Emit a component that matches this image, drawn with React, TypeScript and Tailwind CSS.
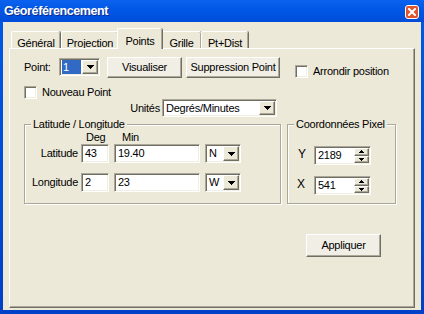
import type { ReactNode } from 'react'

const sunken =
  'border border-t-[#ACA899] border-l-[#ACA899] border-r-white border-b-white shadow-[inset_1px_1px_0_#716F64,inset_-1px_-1px_0_#F1EFE2]'
const raised =
  'border border-t-white border-l-white border-r-[#716F64] border-b-[#716F64] shadow-[inset_-1px_-1px_0_#ACA899]'

function Arrow({ up = false, small = false }: { up?: boolean; small?: boolean }) {
  const w = small ? 5 : 7
  const h = small ? 3 : 4
  const d = up ? `M0 ${h}h${w}L${w / 2} 0z` : `M0 0h${w}L${w / 2} ${h}z`
  return (
    <svg width={w} height={h} viewBox={`0 0 ${w} ${h}`} shapeRendering="crispEdges">
      <path d={d} fill="#000" />
    </svg>
  )
}

function DropBtn() {
  return (
    <div className={`${raised} flex w-[16px] shrink-0 items-center justify-center bg-[#ECE9D8]`}>
      <Arrow />
    </div>
  )
}

function Combo({ className, children }: { className: string; children: ReactNode }) {
  return (
    <div className={`${sunken} flex bg-white p-px ${className}`}>
      <div className="flex min-w-0 flex-1 items-center">{children}</div>
      <DropBtn />
    </div>
  )
}

function Field({ className, value }: { className: string; value: string }) {
  return (
    <div className={`${sunken} flex items-center bg-white pl-[3px] ${className}`}>
      {value}
    </div>
  )
}

function Spin({ value }: { value: string }) {
  return (
    <div className={`${sunken} flex h-[19px] w-[57px] bg-white p-px`}>
      <div className="flex flex-1 items-center pl-[2px]">{value}</div>
      <div className="flex w-[15px] flex-col">
        <div className={`${raised} flex flex-1 items-center justify-center bg-[#ECE9D8]`}>
          <Arrow up small />
        </div>
        <div className={`${raised} flex flex-1 items-center justify-center bg-[#ECE9D8]`}>
          <Arrow small />
        </div>
      </div>
    </div>
  )
}

function Check() {
  return <div className={`${sunken} h-[13px] w-[13px] shrink-0 bg-white`} />
}

function Button({ className, children }: { className: string; children: ReactNode }) {
  return (
    <div className={`${raised} flex items-center justify-center bg-[#F0EEE5] ${className}`}>
      {children}
    </div>
  )
}

function Group({ title, className, children }: { title: string; className: string; children: ReactNode }) {
  return (
    <div
      className={`relative border border-[#ACA899] shadow-[inset_1px_1px_0_#fff,1px_1px_0_#fff] ${className}`}
    >
      <div className="absolute -top-[7px] left-[6px] bg-[#ECE9D8] px-[2px] leading-[13px]">{title}</div>
      {children}
    </div>
  )
}

const tabs = [
  { label: 'Général', w: 'w-[49px]', ml: 'ml-0' },
  { label: 'Projection', w: 'w-[57px]', ml: 'ml-[1px]' },
  { label: 'Points', w: 'w-[45px]', ml: 'ml-0', active: true },
  { label: 'Grille', w: 'w-[40px]', ml: 'ml-0' },
  { label: 'Pt+Dist', w: 'w-[47px]', ml: 'ml-0' },
]

export default function App() {
  return (
    <div className="flex h-[314px] w-[424px] flex-col bg-[#0050DC] font-['Liberation_Sans',Arial,sans-serif] text-[11px] tracking-[-0.25px] text-black">
      {/* title bar */}
      <div className="flex h-[22px] shrink-0 items-center justify-between bg-gradient-to-b from-[#0A62EE] via-[#0056E4] to-[#004CD8] pl-[4px] pr-[5px]">
        <span className="text-[12.5px] font-bold tracking-[-0.4px] text-white [text-shadow:1px_1px_0_#0A2C8C]">
          Géoréférencement
        </span>
        <div className="mt-[2px] flex h-[14px] w-[14px] items-center justify-center rounded-[3px] border border-white bg-[#E0552F]">
          <svg width="8" height="8" viewBox="0 0 8 8">
            <path d="M1 1L7 7M7 1L1 7" stroke="#fff" strokeWidth="2" strokeLinecap="square" />
          </svg>
        </div>
      </div>

      {/* frame */}
      <div className="flex flex-1 flex-col bg-gradient-to-b from-[#0058E6] to-[#0040C8] px-[3px] pb-[4px]">
        <div className="flex flex-1 flex-col bg-[#ECE9D8] px-[6px] pt-[6px]">
          {/* tabs */}
          <div className="flex h-[20px] items-end pl-[2px]">
            {tabs.map((t) =>
              t.active ? (
                <div
                  key={t.label}
                  className={`relative z-10 -mx-[1px] -mb-px flex h-[21px] ${t.w} justify-center rounded-t-[2px] border-l border-t border-white bg-[#ECE9D8] pt-[4px] shadow-[inset_-1px_0_0_#ACA899,1px_0_0_#716F64]`}
                >
                  {t.label}
                </div>
              ) : (
                <div
                  key={t.label}
                  className={`flex h-[17px] ${t.w} ${t.ml} justify-center rounded-t-[2px] border-l border-t border-white pt-[3px] shadow-[inset_-1px_0_0_#ACA899,1px_0_0_#716F64]`}
                >
                  {t.label}
                </div>
              ),
            )}
          </div>

          {/* panel */}
          <div className="flex h-[260px] w-[406px] flex-col border border-t-white border-l-white border-r-[#716F64] border-b-[#716F64] pl-[14px] pt-[8px] shadow-[inset_-1px_-1px_0_#ACA899]">
            {/* row 1 */}
            <div className="flex h-[21px] items-start">
              <span className="flex h-[21px] w-[35px] items-center">Point:</span>
              <Combo className="mt-px h-[18px] w-[41px]">
                <span className="ml-px mr-px flex h-full flex-1 items-center bg-[#316AC5] pl-[1px] text-white">1</span>
              </Combo>
              <Button className="ml-[7px] h-[21px] w-[75px]">Visualiser</Button>
              <Button className="ml-[4px] h-[21px] w-[94px]">Suppression Point</Button>
              <div className="ml-[15px] mt-[6px] flex items-center">
                <Check />
                <span className="ml-[5px]">Arrondir position</span>
              </div>
            </div>

            {/* row 2 */}
            <div className="mt-[8px] flex h-[13px] items-center">
              <Check />
              <span className="ml-[5px]">Nouveau Point</span>
            </div>

            {/* row 3 */}
            <div className="flex w-[253px] items-center">
              <span className="flex-1 pr-[2px] text-right">Unités</span>
              <Combo className="h-[18px] w-[115px]">
                <span className="pl-[2px]">Degrés/Minutes</span>
              </Combo>
            </div>

            {/* groups */}
            <div className="mt-[7px] flex gap-[6px]">
              <Group title="Latitude / Longitude" className="h-[80px] w-[257px]">
                <div className="mt-[6px] flex h-[12px] leading-[12px]">
                  <span className="w-[61px]" />
                  <span className="w-[36px]">Deg</span>
                  <span>Min</span>
                </div>
                <div className="mt-px flex h-[19px] items-center">
                  <span className="w-[56px] pr-[3px] text-right">Latitude</span>
                  <Field className="h-[19px] w-[28px]" value="43" />
                  <Field className="ml-[5px] h-[19px] w-[86px]" value="19.40" />
                  <Combo className="ml-[5px] h-[19px] w-[36px]">
                    <span className="pl-[2px]">N</span>
                  </Combo>
                </div>
                <div className="mt-[10px] flex h-[19px] items-center">
                  <span className="w-[56px] pr-[3px] text-right">Longitude</span>
                  <Field className="h-[19px] w-[28px]" value="2" />
                  <Field className="ml-[5px] h-[19px] w-[86px]" value="23" />
                  <Combo className="ml-[5px] h-[19px] w-[36px]">
                    <span className="pl-[2px]">W</span>
                  </Combo>
                </div>
              </Group>

              <Group title="Coordonnées Pixel" className="h-[80px] w-[109px]">
                <div className="mt-[20px] flex items-center">
                  <span className="w-[26px] pb-[3px] pl-[10px] text-[12px]">Y</span>
                  <Spin value="2189" />
                </div>
                <div className="mt-[9px] flex items-center">
                  <span className="w-[26px] pb-[3px] pl-[9px] text-[12px]">X</span>
                  <Spin value="541" />
                </div>
              </Group>
            </div>

            <Button className="ml-[282px] mt-[30px] h-[23px] w-[75px]">Appliquer</Button>
          </div>
        </div>
      </div>
    </div>
  )
}
